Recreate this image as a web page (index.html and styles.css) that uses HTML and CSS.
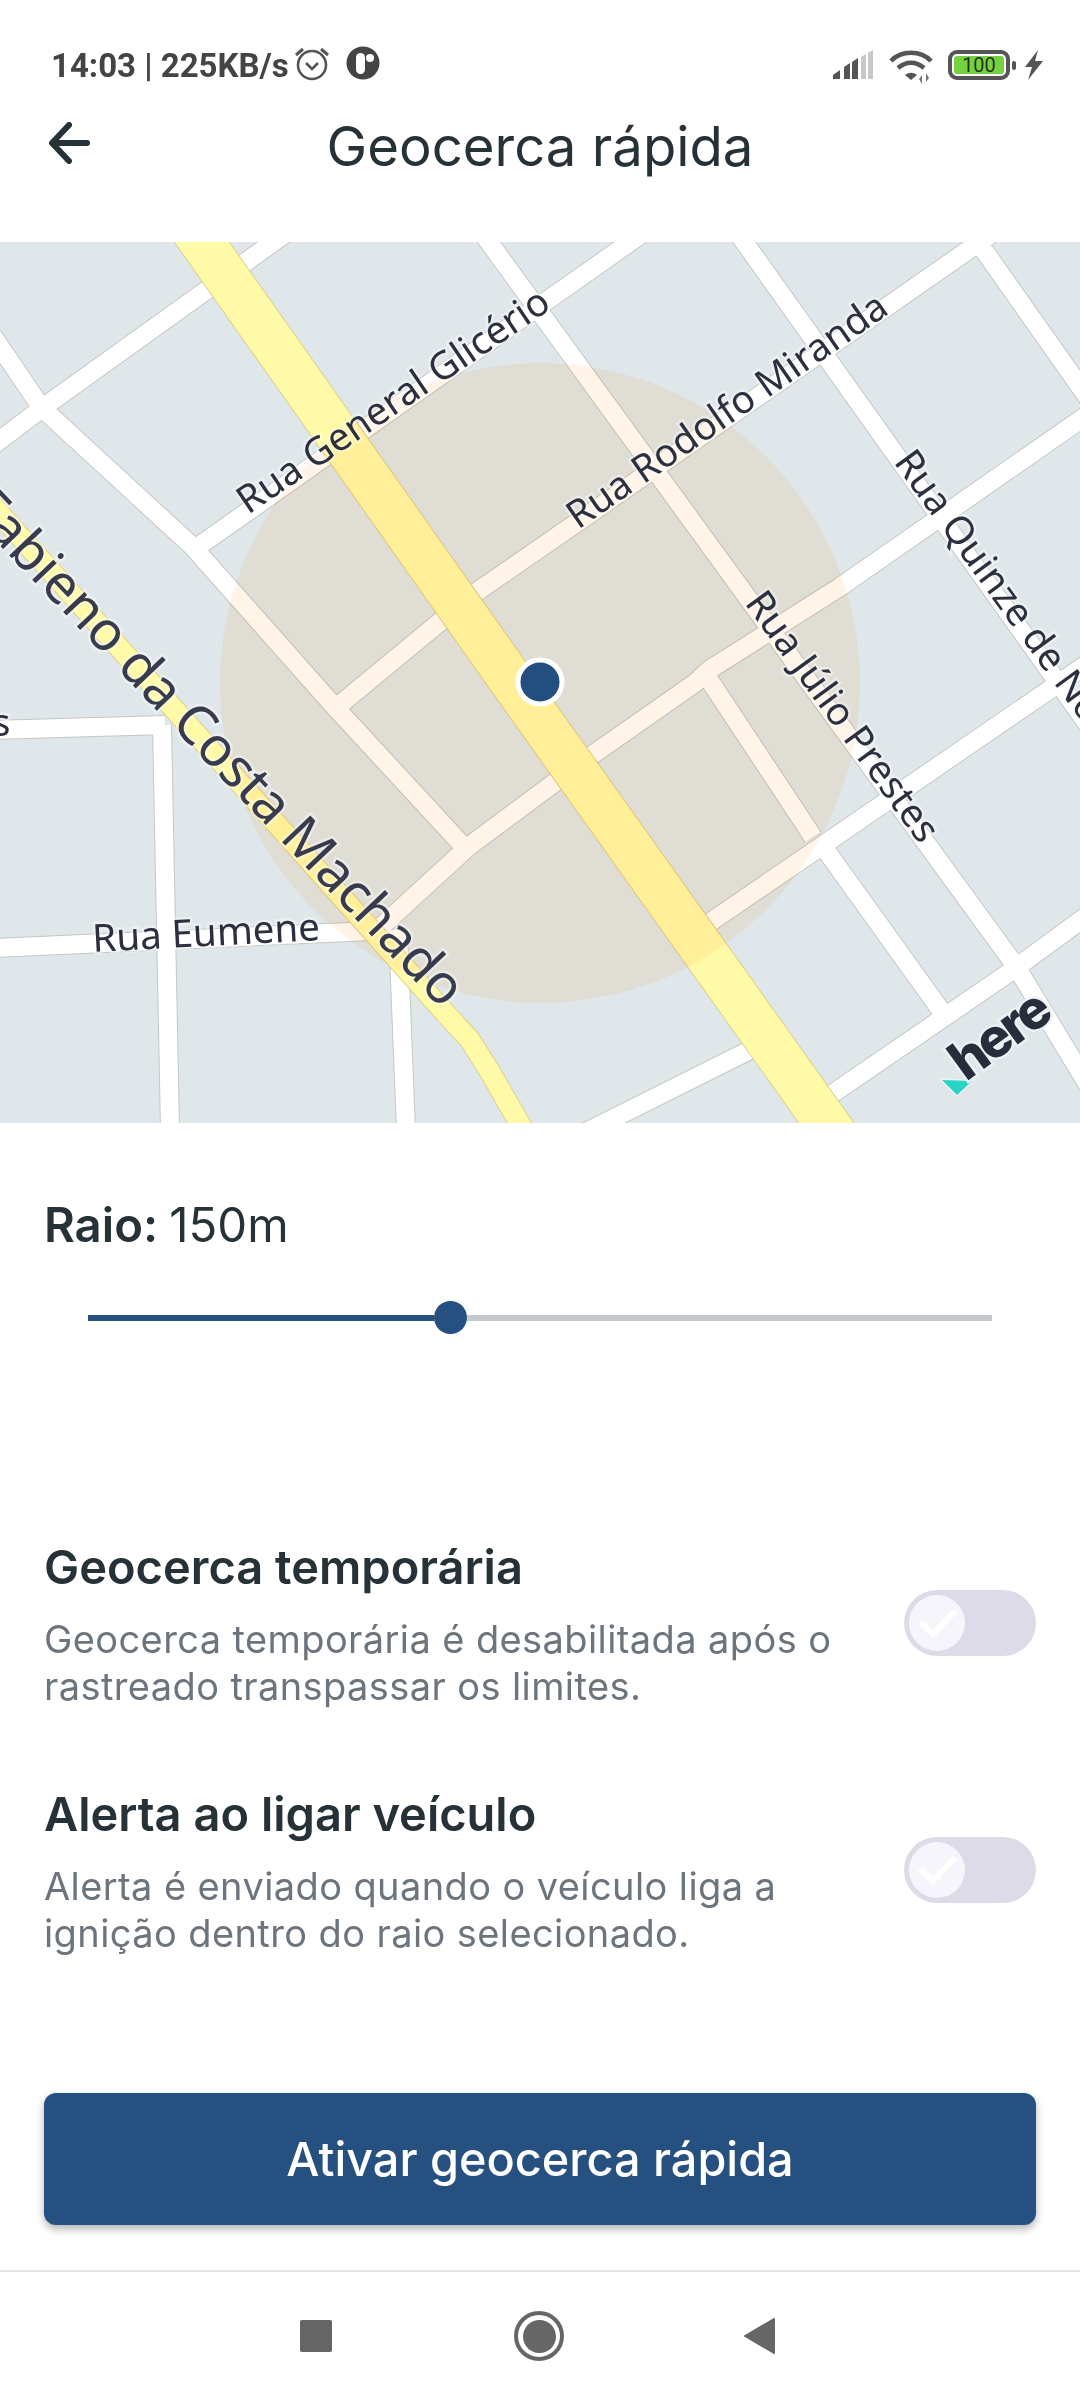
FILE: index.html
```html
<!DOCTYPE html>
<html lang="pt">
<head>
<meta charset="utf-8">
<title>Geocerca rápida</title>
<link rel="stylesheet" href="styles.css">
</head>
<body>
<div class="screen">
  <div class="status">
    <span class="status-text">14:03 | 225KB/s</span>
    <svg class="ic-alarm" width="38" height="38" viewBox="0 0 38 38">
      <circle cx="19" cy="21" r="14" fill="none" stroke="#555" stroke-width="2.6"/>
      <path d="M13 19l6 6 6-6" fill="none" stroke="#555" stroke-width="2.6"/>
      <path d="M3 11l7-6M35 11l-7-6" fill="none" stroke="#555" stroke-width="3"/>
    </svg>
    <svg class="ic-dot" width="34" height="34" viewBox="0 0 34 34">
      <circle cx="17" cy="17" r="16.5" fill="#444"/>
      <rect x="10" y="7" width="9" height="21" rx="4.5" fill="#fff"/>
      <circle cx="24" cy="12" r="4" fill="#fff"/>
    </svg>
    <span class="status-gap"></span>
    <svg class="ic-signal" width="42" height="32" viewBox="0 0 42 32">
      <path d="M1 30v-4l7-5v9z" fill="#555"/>
      <path d="M12 30V18l6-4v16z" fill="#555"/>
      <path d="M20 30V13l6-4v21z" fill="#555"/>
      <path d="M29 30V8l5-3v25z" fill="#c8c8c8"/>
      <path d="M36 30V4l5-3v29z" fill="#c8c8c8"/>
    </svg>
    <svg class="ic-wifi" width="46" height="36" viewBox="0 0 46 36">
      <path d="M2 13C12 2 32 2 42 13" fill="none" stroke="#555" stroke-width="4.5"/>
      <path d="M9 20c8-7 18-7 26 0" fill="none" stroke="#555" stroke-width="4.5"/>
      <path d="M16 27c4-3 8-3 12 0l-6 5z" fill="#555"/>
      <path d="M33 36v-9l-3 4zM37 25v9l3-4z" fill="#777"/>
    </svg>
    <div class="battery"><span class="battery-level">100</span></div>
    <span class="battery-nub"></span>
    <svg class="ic-bolt" width="20" height="30" viewBox="0 0 20 30">
      <path d="M14 0L1 17h7L4 30l15-19h-8z" fill="#555"/>
    </svg>
  </div>

  <header class="topbar">
    <svg class="back" width="42" height="42" viewBox="0 0 42 42">
      <path d="M39 21H5M21 3L4 21l17 18" fill="none" stroke="#263238" stroke-width="6" stroke-linecap="round" stroke-linejoin="round"/>
    </svg>
    <h1 class="title">Geocerca rápida</h1>
  </header>

  <svg class="map" width="1080" height="881" viewBox="0 242 1080 881">
    <defs>
      <path id="roads" d="M300 223L41 409L-20 455
        M-14 326L41 407L193 547L333 705L465 848
        M196 548L660 221
        M1010 221L585 517L475 593L337 707
        M964 222L1100 415
        M1100 406L840 587L709 670L695 683L585 760L468 847L372 935
        M475 223L1017 968L1100 1105
        M706 675L813 837
        M730 222L1054 677L1100 742
        M1100 655L826 843L690 936
        M570 1140L770 1040
        M800 1116L1013 970L1100 906
        M820 842L942 1012
        M-5 948L372 931
        M-5 730L165 725
        M162 725L170 1130
        M398 930L406 1130"/>
      <path id="hway" d="M170 197L511 680L860 1170"/>
      <path id="hway2" d="M-25 486L447 1015L470 1040L490 1072L535 1150"/>
    </defs>
    <rect x="0" y="242" width="1080" height="881" class="land"/>
    <use href="#roads" class="road-case"/>
    <use href="#roads" class="road-fill"/>
    <use href="#hway2" class="hway2-case"/>
    <use href="#hway2" class="hway2-fill"/>
    <use href="#hway" class="hway-case"/>
    <use href="#hway" class="hway-fill"/>
    <circle cx="540" cy="683" r="320" class="fence"/>
    <text class="label" transform="translate(248 515) rotate(-34.2)">Rua General Glicério</text>
    <text class="label" transform="translate(578 530) rotate(-34.8)">Rua Rodolfo Miranda</text>
    <text class="label" transform="translate(893 462) rotate(54)">Rua Quinze de Novembro</text>
    <text class="label" transform="translate(744 603) rotate(54)">Rua Júlio Prestes</text>
    <text class="label" transform="translate(93 952) rotate(-3)">Rua Eumene</text>
    <text class="label" x="-8" y="736">s</text>
    <text class="label label-big" text-anchor="end" transform="translate(442 1010) rotate(46.4)">Fabieno da Costa Machado</text>
    <polygon class="here-mark" points="942,1080 972,1081 957,1095"/>
    <text class="here-text" transform="translate(966 1082) rotate(-36)">here</text>
    <circle cx="540" cy="682" r="22" class="pin"/>
  </svg>

  <main class="content">
    <p class="radius"><strong class="radius-key">Raio:</strong> 150m</p>
    <div class="slider">
      <span class="slider-on"></span>
      <span class="slider-thumb"></span>
      <span class="slider-off"></span>
    </div>

    <section class="option option-first">
      <div class="option-text">
        <h2 class="option-title">Geocerca temporária</h2>
        <p class="option-desc">Geocerca temporária é desabilitada após o<br>rastreado transpassar os limites.</p>
      </div>
      <div class="toggle">
        <span class="knob">
          <svg width="40" height="30" viewBox="0 0 40 30"><path d="M3 14l13 12L38 3" fill="none" stroke="#fff" stroke-width="6"/></svg>
        </span>
      </div>
    </section>

    <section class="option">
      <div class="option-text">
        <h2 class="option-title">Alerta ao ligar veículo</h2>
        <p class="option-desc">Alerta é enviado quando o veículo liga a<br>ignição dentro do raio selecionado.</p>
      </div>
      <div class="toggle">
        <span class="knob">
          <svg width="40" height="30" viewBox="0 0 40 30"><path d="M3 14l13 12L38 3" fill="none" stroke="#fff" stroke-width="6"/></svg>
        </span>
      </div>
    </section>

    <button class="cta">Ativar geocerca rápida</button>
  </main>

  <nav class="navbar">
    <span class="nav-square"></span>
    <span class="nav-home"><span class="nav-home-dot"></span></span>
    <svg class="nav-back" width="32" height="38" viewBox="0 0 32 38">
      <path d="M31 2v34L2 19z" fill="#666" stroke="#666" stroke-width="2" stroke-linejoin="round"/>
    </svg>
  </nav>
</div>
</body>
</html>
```

FILE: styles.css
```css
* { box-sizing: border-box; }
html, body { margin: 0; padding: 0; background: #fff; }
body { font-family: "Inter", "Liberation Sans", sans-serif; color: #263238; }
.screen { width: 1080px; height: 2400px; display: flex; flex-direction: column; background: #fff; overflow: hidden; }

.status { height: 100px; padding: 30px 36px 0 51px; display: flex; align-items: center; }
.status-text { font: 700 33px/1 "Roboto", sans-serif; color: #444; }
.ic-alarm { margin-left: 4px; margin-top: -4px; }
.ic-dot { margin-left: 15px; margin-top: -4px; }
.status-gap { flex: 1; }
.ic-signal { margin-top: -1px; }
.ic-wifi { margin-left: 15px; margin-top: 2px; }
.battery { width: 62px; height: 30px; margin-left: 13px; border: 4px solid #555; border-radius: 9px; padding: 2px; display: flex; }
.battery-level { flex: 1; background: #76d13f; border-radius: 3px; font: 400 20px/18px "Roboto", sans-serif; color: #22301a; text-align: center; }
.battery-nub { width: 4px; height: 9px; margin-left: 2px; background: #555; border-radius: 2px; }
.ic-bolt { margin-left: 8px; }

.topbar { height: 86px; margin-bottom: 56px; padding: 0 0 0 48px; display: flex; align-items: center; position: relative; }
.back { flex: none; }
.title { position: absolute; left: 0; right: 0; margin: 0; padding-top: 6px; text-align: center; font: 400 54.5px/1 "Inter", sans-serif; color: #263238; }

.map { display: block; flex: none; }
.land { fill: #e0e7eb; }
.road-case { fill: none; stroke: #c4c7c5; stroke-width: 20; }
.road-fill { fill: none; stroke: #fff; stroke-width: 18; }
.hway-case { fill: none; stroke: #dccf8e; stroke-width: 46; }
.hway-fill { fill: none; stroke: #fffaa8; stroke-width: 44; }
.hway2-case { fill: none; stroke: #dccf8e; stroke-width: 22; }
.hway2-fill { fill: none; stroke: #fffaa8; stroke-width: 20; }
.fence { fill: rgb(255, 244, 231); mix-blend-mode: multiply; }
.label { font: 400 38.5px "Noto Sans", sans-serif; fill: #2b2f3e; stroke: rgba(255, 255, 255, 0.4); stroke-width: 5; paint-order: stroke; }
.label-big { font-size: 54.5px; fill: #373b4d; }
.pin { fill: #224e80; stroke: #fff; stroke-width: 5; }
.here-mark { fill: #2ad4c4; stroke: #eef1f3; stroke-width: 3; paint-order: stroke; }
.here-text { font: 800 54px "Inter", sans-serif; letter-spacing: -3px; fill: #272d3b; stroke: #eef1f3; stroke-width: 5; paint-order: stroke; }

.content { flex: 1; padding: 0 44px; display: flex; flex-direction: column; }
.radius { margin: 72px 0 0; font: 400 47.3px/60px "Inter", sans-serif; word-spacing: -2px; color: #263238; }
.radius-key { font-weight: 600; }
.slider { margin: 46px 44px 0; height: 33px; display: flex; align-items: center; }
.slider-on { width: 346px; height: 6px; background: #26507f; }
.slider-thumb { width: 33px; height: 33px; border-radius: 50%; background: #26507f; flex: none; }
.slider-off { flex: 1; height: 6px; background: #c5c9cc; }

.option { display: flex; justify-content: space-between; align-items: flex-end; margin-top: 76px; }
.option-first { margin-top: 205px; }
.option-text { flex: 1; }
.option-title { margin: 0 0 21px; font: 600 47px/56px "Inter", sans-serif; color: #263238; }
.option-desc { margin: 0; font: 400 38px/47px "Inter", sans-serif; color: #6c757d; letter-spacing: 0.4px; }
.toggle { width: 132px; height: 66px; margin-bottom: 54px; border-radius: 33px; background: #dedbe9; padding: 5px; flex: none; display: flex; }
.knob { width: 56px; height: 56px; border-radius: 50%; background: #f6f5fb; display: flex; align-items: center; justify-content: center; }

.cta { margin-top: 136px; height: 132px; border: 0; border-radius: 12px; background: #26507f; color: #fff; font: 500 46.8px/1 "Inter", sans-serif; box-shadow: 0 4px 8px rgba(0, 0, 0, 0.3); width: 100%; flex: none; }

.navbar { height: 130px; border-top: 2px solid #e6e6e6; display: flex; align-items: center; padding-left: 300px; flex: none; }
.nav-square { width: 32px; height: 32px; background: #666; border-radius: 2px; }
.nav-home { width: 50px; height: 50px; margin-left: 182px; border: 4px solid #666; border-radius: 50%; display: flex; align-items: center; justify-content: center; }
.nav-home-dot { width: 33px; height: 33px; border-radius: 50%; background: #666; }
.nav-back { margin-left: 179px; }
```
